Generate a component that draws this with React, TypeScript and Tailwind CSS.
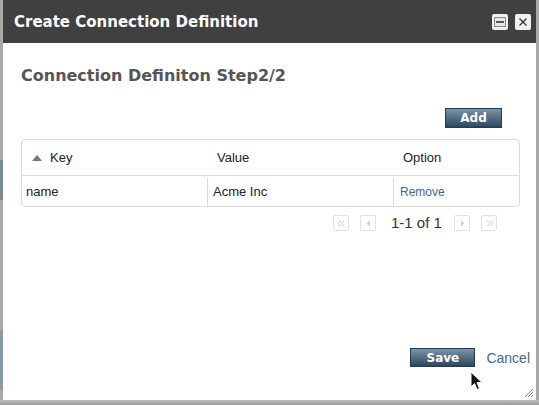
import React from "react";

const Pager = ({ kind }: { kind: "first" | "prev" | "next" | "last" }) => (
  <div className="w-[16px] h-[16px] border border-[#e2e2e2] rounded-[2px] bg-white flex items-center justify-center">
    <svg width="9" height="9" viewBox="0 0 9 9">
      {kind === "first" && (
        <g stroke="#c8c8c8" strokeWidth="1" fill="none">
          <path d="M4 1.5 L1.5 4.5 L4 7.5" />
          <path d="M7 1.5 L4.5 4.5 L7 7.5" />
        </g>
      )}
      {kind === "last" && (
        <g stroke="#c8c8c8" strokeWidth="1" fill="none">
          <path d="M2 1.5 L4.5 4.5 L2 7.5" />
          <path d="M5 1.5 L7.5 4.5 L5 7.5" />
        </g>
      )}
      {kind === "prev" && <path d="M6 1.5 L2.5 4.5 L6 7.5 Z" fill="#cfcfcf" />}
      {kind === "next" && <path d="M3 1.5 L6.5 4.5 L3 7.5 Z" fill="#cfcfcf" />}
    </svg>
  </div>
);

export default function App() {
  return (
    <div className="w-[539px] h-[405px] bg-[#a9a9a9] relative overflow-hidden" style={{ fontFamily: "'Liberation Sans', Arial, sans-serif" }}>
      <div className="absolute left-0 top-[160px] w-[3px] h-[40px] bg-[#7a8a96]" />
      <div className="absolute left-0 top-[330px] w-[3px] h-[60px] bg-[#8a98a4]" />
      <div className="ml-[3px] w-[533px] h-[400px] bg-white flex flex-col relative">
        <div className="h-[43px] bg-[#404040] flex items-center justify-between pl-[11px] pr-[5px] shrink-0">
          <div className="text-white font-bold text-[15px] pt-[2px]" style={{ fontFamily: "'DejaVu Sans', sans-serif" }}>
            Create Connection Definition
          </div>
          <div className="flex gap-[7px] items-center pt-[1px]">
            <div className="w-[16px] h-[16px] bg-[#f0f0f0] rounded-[2px] flex items-center justify-center">
              <svg width="12" height="10" viewBox="0 0 12 10">
                <rect x="0.5" y="0.5" width="11" height="9" fill="#e8e8e8" stroke="#888" />
                <rect x="2" y="4" width="8" height="2" fill="#555" />
              </svg>
            </div>
            <div className="w-[16px] h-[16px] bg-[#f0f0f0] rounded-[2px] flex items-center justify-center">
              <svg width="10" height="10" viewBox="0 0 10 10">
                <path d="M1.5 1.5 L8.5 8.5 M8.5 1.5 L1.5 8.5" stroke="#333" strokeWidth="1.3" />
              </svg>
            </div>
          </div>
        </div>
        <div className="px-[18px] pt-[23px] flex flex-col flex-1">
          <div className="text-[#555] font-bold text-[16px] leading-[19px]" style={{ fontFamily: "'DejaVu Sans', sans-serif" }}>
            Connection Definiton Step2/2
          </div>
          <div className="flex justify-end mt-[23px] pr-[16px]">
            <button className="w-[57px] h-[20px] bg-gradient-to-b from-[#7b95a9] to-[#2c4860] border border-[#243a4e] text-white font-bold text-[12px] leading-none" style={{ fontFamily: "'DejaVu Sans', sans-serif" }}>
              Add
            </button>
          </div>
          <div className="mt-[11px] border border-[#dcdcdc] rounded-[4px] w-[499px] text-[13px] text-[#222]">
            <div className="h-[36px] flex items-center border-b border-[#dcdcdc]">
              <div className="w-[186px] flex items-center pl-[10px] gap-[8px]">
                <svg width="10" height="7" viewBox="0 0 10 7"><path d="M0 7 L5 1 L10 7 Z" fill="#6d7b88" /></svg>
                <span>Key</span>
              </div>
              <div className="w-[186px] pl-[9px]">Value</div>
              <div className="flex-1 pl-[9px]">Option</div>
            </div>
            <div className="h-[30px] flex items-center pt-[2px]">
              <div className="w-[186px] h-full flex items-center pl-[4px] border-r border-[#dcdcdc]">name</div>
              <div className="w-[186px] h-full flex items-center pl-[5px] border-r border-[#dcdcdc]">Acme Inc</div>
              <div className="flex-1 pl-[6px] text-[12px] text-[#45698a]">Remove</div>
            </div>
          </div>
          <div className="flex items-center mt-[5px] ml-[312px]">
            <Pager kind="first" />
            <div className="w-[11px]" />
            <Pager kind="prev" />
            <div className="w-[15px]" />
            <span className="text-[15px] text-[#333] w-[63px]">1-1 of 1</span>
            <Pager kind="next" />
            <div className="w-[11px]" />
            <Pager kind="last" />
          </div>
          <div className="flex-1" />
        </div>
        <div className="flex justify-end items-center pb-[31px] pr-[6px] gap-[11px]">
          <button className="w-[65px] h-[19px] bg-gradient-to-b from-[#7b95a9] to-[#2c4860] border border-[#243a4e] text-white font-bold text-[12px] leading-none" style={{ fontFamily: "'DejaVu Sans', sans-serif" }}>
            Save
          </button>
          <span className="text-[14px] text-[#45698a] pt-[2px]">Cancel</span>
        </div>
        <svg className="absolute right-[2px] bottom-[2px]" width="10" height="10" viewBox="0 0 10 10">
          <path d="M1 9 L9 1 M4 9 L9 4 M7 9 L9 7" stroke="#666" strokeWidth="0.8" />
        </svg>
      </div>
      <svg className="absolute left-[470px] top-[371px]" width="13" height="20" viewBox="0 0 13 20">
        <path d="M1 1 L1 16 L4.5 12.5 L7 18.5 L9.5 17.5 L7 11.5 L12 11.5 Z" fill="#111" stroke="#fff" strokeWidth="1" />
      </svg>
      <div className="absolute left-0 bottom-0 w-full h-[5px] bg-gradient-to-b from-[#c0c0c0] to-[#999]" />
    </div>
  );
}
